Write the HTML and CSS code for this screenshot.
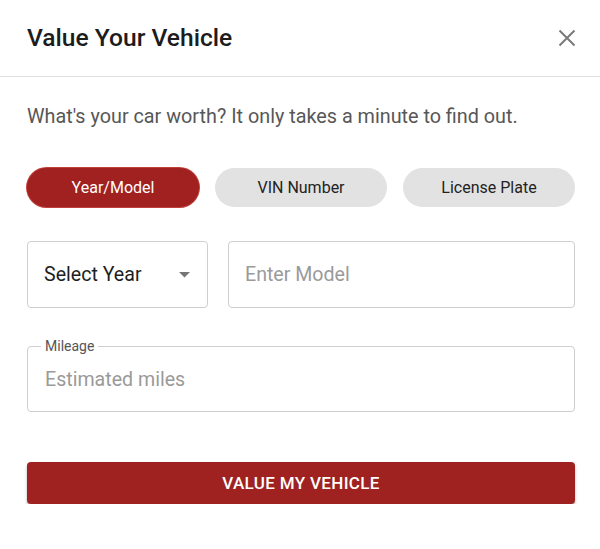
FILE: index.html
```html
<!DOCTYPE html>
<html lang="en">
<head>
<meta charset="utf-8">
<title>Value Your Vehicle</title>
<link rel="stylesheet" href="styles.css">
</head>
<body>
<div class="dialog">
  <header class="dialog-header">
    <h1 class="dialog-title">Value Your Vehicle</h1>
    <button class="close-btn" aria-label="Close">
      <svg width="18" height="18" viewBox="0 0 18 18"><path d="M1.5 1.5 L16.5 16.5 M16.5 1.5 L1.5 16.5" stroke="#7a7a7a" stroke-width="2" fill="none"/></svg>
    </button>
  </header>
  <main class="dialog-body">
    <p class="intro">What's your car worth? It only takes a minute to find out.</p>
    <div class="tabs">
      <button class="tab tab-active">Year/Model</button>
      <button class="tab">VIN Number</button>
      <button class="tab">License Plate</button>
    </div>
    <div class="row">
      <div class="select-box">
        <span class="select-text">Select Year</span>
        <svg class="select-arrow" width="11" height="6" viewBox="0 0 11 6"><path d="M0 0 L11 0 L5.5 5.5 Z" fill="#767676"/></svg>
      </div>
      <div class="text-box"><span class="placeholder">Enter Model</span></div>
    </div>
    <fieldset class="mileage">
      <legend class="mileage-label">Mileage</legend>
      <div class="mileage-input"><span class="placeholder">Estimated miles</span></div>
    </fieldset>
    <button class="submit">VALUE MY VEHICLE</button>
  </main>
</div>
</body>
</html>
```

FILE: styles.css
```css
html, body {
  margin: 0;
  padding: 0;
  background: #ffffff;
}
body {
  font-family: Roboto, "Liberation Sans", Arial, sans-serif;
  color: #212121;
}
.dialog {
  width: 600px;
}
.dialog-header {
  height: 77px;
  border-bottom: 1px solid #e0e0e0;
  display: flex;
  align-items: center;
  justify-content: space-between;
  padding: 0 24px 0 27px;
  box-sizing: border-box;
}
.dialog-title {
  margin: 0;
  font-size: 24.6px;
  font-weight: 500;
  color: #1c1c1c;
  line-height: 28px;
}
.close-btn {
  border: 0;
  background: transparent;
  padding: 0;
  width: 18px;
  height: 18px;
  display: flex;
}
.dialog-body {
  padding: 0 25px 0 27px;
  display: flex;
  flex-direction: column;
}
.intro {
  margin: 28px 0 0 0;
  font-size: 19.8px;
  line-height: 24px;
  color: #575757;
}
.tabs {
  display: flex;
  gap: 16px;
  margin-top: 39px;
}
.tab {
  flex: 1;
  height: 39px;
  border: 0;
  border-radius: 20px;
  background: #e2e2e2;
  color: #222222;
  font-family: Roboto, "Liberation Sans", Arial, sans-serif;
  font-size: 16px;
  padding: 0;
}
.tab-active {
  background: #a0211f;
  color: #ffffff;
  box-shadow: 0 0 0 1px #c0403c;
}
.row {
  display: flex;
  gap: 20px;
  margin-top: 34px;
}
.select-box,
.text-box {
  height: 67px;
  box-sizing: border-box;
  border: 1px solid #cfcfcf;
  border-radius: 4px;
  display: flex;
  align-items: center;
  padding: 0 17px 0 16px;
  font-size: 19.6px;
}
.select-box {
  width: 181px;
  justify-content: space-between;
  color: #1e1e1e;
}
.select-arrow {
  margin-top: 1px;
}
.text-box {
  flex: 1;
}
.placeholder {
  color: #9a9a9a;
  font-size: 19.6px;
}
.mileage {
  margin: 30px 0 0 0;
  padding: 0 16px 13px 13px;
  border: 1px solid #cfcfcf;
  border-radius: 4px;
  min-inline-size: 0;
}
.mileage-label {
  font-size: 14px;
  line-height: 16px;
  color: #555555;
  padding: 0 4px;
}
.mileage-input {
  height: 38px;
  margin-top: 6px;
  padding-left: 4px;
  display: flex;
  align-items: center;
}
.submit {
  margin-top: 50px;
  height: 42px;
  border: 0;
  border-radius: 4px;
  background: #9f2220;
  color: #ffffff;
  font-family: Roboto, "Liberation Sans", Arial, sans-serif;
  font-size: 17px;
  font-weight: 500;
  letter-spacing: 0.35px;
  box-shadow: 0 2px 3px rgba(0, 0, 0, 0.3);
}
```
